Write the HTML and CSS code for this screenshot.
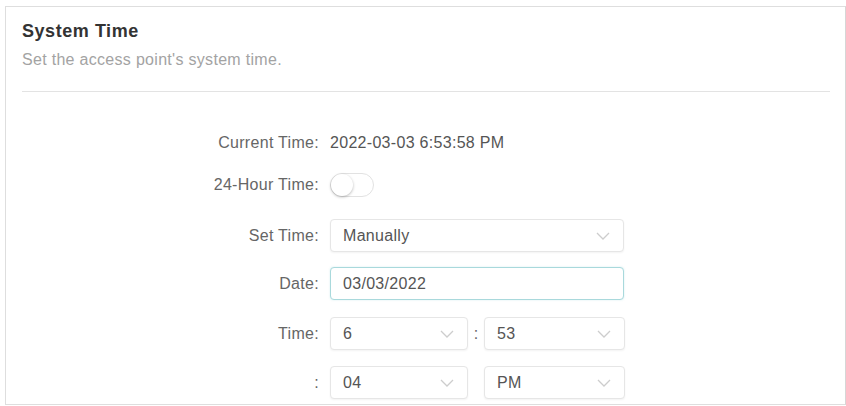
FILE: index.html
```html
<!DOCTYPE html>
<html>
<head>
<meta charset="utf-8">
<link rel="stylesheet" href="styles.css">
</head>
<body>
<div class="card">
  <h2 class="title">System Time</h2>
  <p class="subtitle">Set the access point's system time.</p>
  <div class="sep"></div>
  <div class="form">
    <div class="row row-text">
      <span class="label">Current Time:</span>
      <span class="value">2022-03-03 6:53:58 PM</span>
    </div>
    <div class="row row-toggle">
      <span class="label">24-Hour Time:</span>
      <span class="toggle"><span class="knob"></span></span>
    </div>
    <div class="row row-set">
      <span class="label">Set Time:</span>
      <div class="select wide"><span>Manually</span>
        <svg class="chev" viewBox="0 0 14 8" width="14" height="8"><path d="M1 1 L7 7 L13 1" fill="none" stroke="#cdcdcd" stroke-width="1.3"/></svg>
      </div>
    </div>
    <div class="row row-date">
      <span class="label">Date:</span>
      <div class="input wide focused"><span>03/03/2022</span></div>
    </div>
    <div class="row row-time">
      <span class="label">Time:</span>
      <div class="select small"><span>6</span>
        <svg class="chev" viewBox="0 0 14 8" width="14" height="8"><path d="M1 1 L7 7 L13 1" fill="none" stroke="#cdcdcd" stroke-width="1.3"/></svg>
      </div>
      <span class="colon">:</span>
      <div class="select small2"><span>53</span>
        <svg class="chev" viewBox="0 0 14 8" width="14" height="8"><path d="M1 1 L7 7 L13 1" fill="none" stroke="#cdcdcd" stroke-width="1.3"/></svg>
      </div>
    </div>
    <div class="row row-last">
      <span class="label">:</span>
      <div class="select small"><span>04</span>
        <svg class="chev" viewBox="0 0 14 8" width="14" height="8"><path d="M1 1 L7 7 L13 1" fill="none" stroke="#cdcdcd" stroke-width="1.3"/></svg>
      </div>
      <span class="colon"></span>
      <div class="select small2"><span>PM</span>
        <svg class="chev" viewBox="0 0 14 8" width="14" height="8"><path d="M1 1 L7 7 L13 1" fill="none" stroke="#cdcdcd" stroke-width="1.3"/></svg>
      </div>
    </div>
  </div>
</div>
</body>
</html>
```
FILE: styles.css
```css
* { box-sizing: border-box; }
html, body { margin: 0; padding: 0; background: #fff; }
body {
  font-family: "Liberation Sans", Arial, sans-serif;
  color: #555;
  overflow: hidden;
}
.card {
  margin: 6px 0 0 5px;
  width: 841px;
  border: 1px solid #dedede;
  border-right-color: #d6d6d6;
  padding: 14px 15px 5px 16px;
}
.title {
  margin: 0;
  font-size: 18px;
  line-height: 20px;
  font-weight: bold;
  letter-spacing: 0.55px;
  color: #333;
}
.subtitle {
  margin: 10px 0 0;
  font-size: 16px;
  line-height: 18px;
  letter-spacing: 0.3px;
  color: #a3a3a3;
}
.sep {
  margin-top: 22px;
  height: 1px;
  background: #e3e3e3;
}
.form {
  padding-top: 41px;
  display: flex;
  flex-direction: column;
  font-size: 16px;
  letter-spacing: 0.3px;
}
.row {
  display: flex;
  align-items: center;
}
.label {
  width: 297px;
  margin-right: 11px;
  text-align: right;
  color: #666;
  line-height: 20px;
}
.value { color: #555; line-height: 20px; }
.row-text { height: 20px; }
.row-toggle { margin-top: 20px; height: 24px; }
.row-set { margin-top: 22px; }
.row-date { margin-top: 15px; }
.row-time { margin-top: 17px; }
.row-last { margin-top: 16px; }

.toggle {
  position: relative;
  display: block;
  width: 44px;
  height: 24px;
  border: 1px solid #e2e2e2;
  border-radius: 12px;
  background: #fff;
}
.knob {
  position: absolute;
  left: 0;
  top: 0;
  width: 22px;
  height: 22px;
  border-radius: 50%;
  background: #fff;
  box-shadow: 0 1px 3px rgba(0,0,0,0.28);
}
.select, .input {
  height: 33px;
  border: 1px solid #e6e6e6;
  border-radius: 4px;
  background: #fff;
  box-shadow: 0 1px 2px rgba(0,0,0,0.05);
  display: flex;
  align-items: center;
  justify-content: space-between;
  padding: 0 13px 0 12px;
  color: #555;
}
.wide { width: 294px; }
.small { width: 138px; }
.small2 { width: 141px; }
.colon {
  width: 16px;
  text-align: center;
  color: #666;
  letter-spacing: 0;
}
.chev { display: block; }
.focused {
  border-color: #a9d9dc;
  box-shadow: 0 0 2px rgba(120,200,205,0.35);
}
```
